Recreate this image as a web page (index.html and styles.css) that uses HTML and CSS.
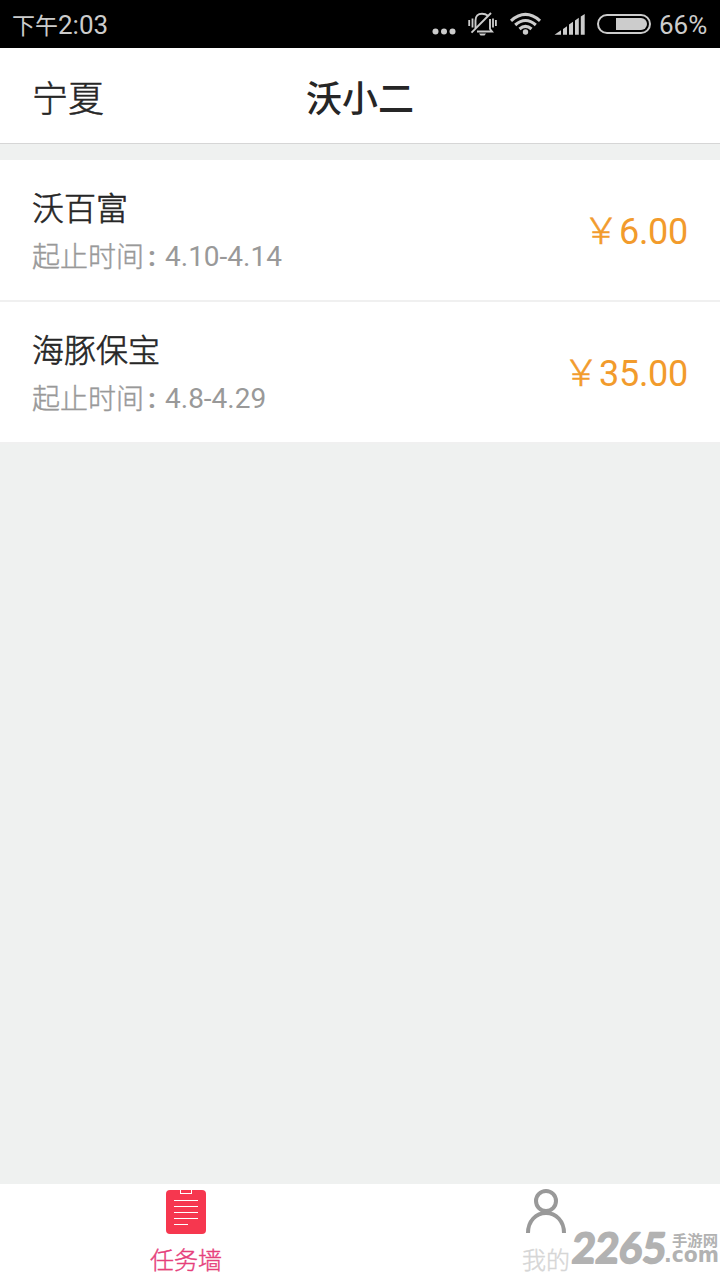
FILE: index.html
```html
<!DOCTYPE html>
<html lang="zh-CN">
<head>
<meta charset="utf-8">
<title>沃小二</title>
<link rel="stylesheet" href="styles.css">
</head>
<body>
<div class="screen">
  <div class="status">
    <span class="time"><span class="meridiem">下午</span>2:03</span>
    <svg class="status-icons" width="222" height="48" viewBox="430 0 222 48" fill="#ccc">
      <circle cx="435.500" cy="31.500" r="3"/><circle cx="444" cy="31.500" r="3"/><circle cx="452.500" cy="31.500" r="3"/>
      <g fill="none" stroke="#ccc" stroke-width="1.900">
        <path d="M475.500 28V20.500C475.500 16 478 13.700 482 13.700C484.500 13.700 486.500 14.500 488 15.700"/>
        <path d="M490 19V29L492 31.500H477"/>
        <path d="M471.500 32.700L491 13"/>
        <path d="M469.200 20V26M472.500 18.500V27.500M493 18.500V27.500M495.900 20V26" stroke-width="1.800"/>
      </g>
      <path d="M479 33.500H486L484.500 35.500H480.500Z"/>
      <circle cx="525.500" cy="32" r="2.700"/>
      <g fill="none" stroke="#ccc" stroke-width="3.100">
        <path d="M511 20.800Q525.500 8 540 20.800"/>
        <path d="M515.200 25Q525.500 16 535.800 25"/>
        <path d="M519.500 29Q525.500 23.600 531.500 29"/>
      </g>
      <path d="M554.500 34.700L561 30.300V34.700ZM563 29L567 26.300V34.700H563ZM569 24.500L573 21.800V34.700H569ZM575 20.500L578.800 17.800V34.700H575ZM580.800 16.500L584.700 14V34.700H580.800Z"/>
      <rect x="598" y="15" width="52" height="18" rx="9" fill="none" stroke="#ccc" stroke-width="2"/>
      <path d="M616 18H641A6 6 0 0 1 641 30H616Z"/>
    </svg>
    <span class="percent">66%</span>
  </div>
  <header class="header">
    <span class="region">宁夏</span>
    <h1 class="title">沃小二</h1>
  </header>
  <main class="list">
    <div class="task">
      <div class="info">
        <div class="name">沃百富</div>
        <div class="dates"><span class="label">起止时间</span><span class="colon">:</span><span>4.10-4.14</span></div>
      </div>
      <div class="price"><span class="yen">￥</span><span>6.00</span></div>
    </div>
    <div class="task">
      <div class="info">
        <div class="name">海豚保宝</div>
        <div class="dates"><span class="label">起止时间</span><span class="colon">:</span><span>4.8-4.29</span></div>
      </div>
      <div class="price"><span class="yen">￥</span><span>35.00</span></div>
    </div>
  </main>
  <nav class="tabs">
    <div class="tab active">
      <svg width="44" height="48" viewBox="0 0 44 48">
        <rect x="2" y="4" width="40" height="44" rx="4" fill="#f6374f"/>
        <rect x="16.500" y="3.500" width="11" height="4" fill="#f6374f" stroke="#fff"/>
        <path d="M10 14.500H34M10 20.500H34M10 26.500H34M10 32.500H34M10 38.500H24" stroke="#fff"/>
      </svg>
      <span>任务墙</span>
    </div>
    <div class="tab">
      <svg width="44" height="48" viewBox="0 0 44 48" fill="none" stroke="#999" stroke-width="4">
        <circle cx="22" cy="15" r="10"/>
        <path d="M4 47C4 35 12 27 22 27S40 35 40 47"/>
      </svg>
      <span>我的</span>
    </div>
  </nav>
  <svg class="watermark" width="152" height="54" viewBox="568 1226 152 54" fill="#b2b2b2">
    <text class="wm-number" transform="translate(571 1262.500) skewX(-5)" textLength="94" lengthAdjust="spacingAndGlyphs">2265</text>
    <text class="wm-name" x="672" y="1246" textLength="46" lengthAdjust="spacingAndGlyphs">手游网</text>
    <text class="wm-com" x="664" y="1262" textLength="55" lengthAdjust="spacingAndGlyphs">.com</text>
  </svg>
</div>
</body>
</html>
```

FILE: styles.css
```css
* { box-sizing: border-box; }
body {
  margin: 0;
  font-family: Roboto, "Noto Sans CJK SC", sans-serif;
  color: #262626;
}
.screen {
  position: relative;
  width: 720px;
  height: 1280px;
  display: flex;
  flex-direction: column;
  background: #eff1f0;
  overflow: hidden;
}
.status {
  height: 48px;
  flex: none;
  display: flex;
  align-items: center;
  padding: 0 12px;
  background: #000;
  color: #ccc;
  font-size: 26px;
  line-height: 48px;
}
.time { flex: 1; padding-top: 4px; }
.meridiem { font-size: 23px; }
.status-icons { flex: none; }
.percent { width: 56px; padding: 2px 0 0 7px; }
.header {
  height: 96px;
  flex: none;
  display: grid;
  grid-template-columns: 1fr auto 1fr;
  align-items: center;
  padding: 0 32px;
  background: #fff;
  border-bottom: 1px solid #d6d6d6;
}
.region { font-size: 36px; font-weight: 300; -webkit-text-stroke: 0.5px; }
.title { margin: 0; font-size: 36px; font-weight: 500; }
.list { flex: 1; padding-top: 16px; }
.task {
  height: 142px;
  display: flex;
  justify-content: space-between;
  align-items: center;
  padding: 6px 32px 0;
  background: #fff;
  border-bottom: 2px solid #f0f0f0;
}
.name {
  font-size: 32px;
  line-height: 48px;
  font-weight: 300;
  -webkit-text-stroke: 0.6px;
}
.dates {
  display: flex;
  font-size: 28px;
  line-height: 48px;
  color: #999;
}
.label { padding-top: 1px; font-weight: 300; -webkit-text-stroke: 0.4px; }
.colon { width: 21px; padding-left: 4px; font-weight: 700; }
.price {
  display: flex;
  padding-bottom: 2px;
  font-size: 36px;
  line-height: 48px;
  letter-spacing: -0.3px;
  color: #f29b2c;
}
.yen { width: 36px; font-weight: 300; -webkit-text-stroke: 0.6px; }
.tabs {
  height: 96px;
  flex: none;
  display: grid;
  grid-template-columns: 360px 354px;
  padding-left: 6px;
  background: #fff;
}
.tab {
  width: 360px;
  display: flex;
  flex-direction: column;
  align-items: center;
  padding-top: 2px;
  font-size: 24px;
  line-height: 54px;
  font-weight: 300;
  -webkit-text-stroke: 0.4px;
  color: #d6d6d6;
}
.tab svg { flex: none; }
.active { color: #e6407b; }
.watermark { position: absolute; left: 568px; top: 1226px; }
.wm-number {
  font: 700 42px Lato, sans-serif;
  stroke: #b2b2b2;
  stroke-width: 1.8;
  stroke-linejoin: round;
}
.wm-name { font: 700 15px "Noto Sans CJK SC", sans-serif; }
.wm-com { font: 700 21px "DejaVu Sans", sans-serif; }
```
